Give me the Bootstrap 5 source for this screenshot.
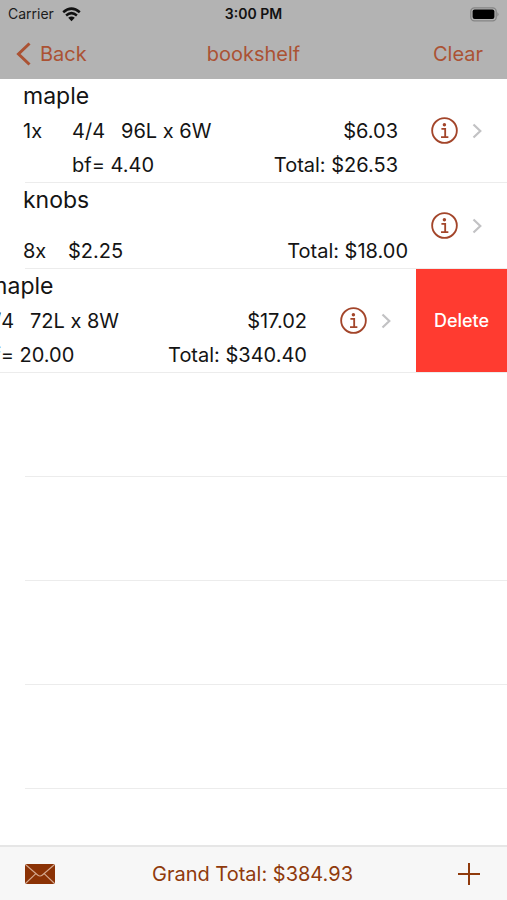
<!DOCTYPE html>
<html lang="en">
<head>
<meta charset="utf-8">
<meta name="viewport" content="width=device-width, initial-scale=1">
<title>bookshelf</title>
<link href="https://cdn.jsdelivr.net/npm/bootstrap@5.3.0/dist/css/bootstrap.min.css" rel="stylesheet">
<style>
body { font-family: Inter, "Liberation Sans", sans-serif; font-size: 20px; line-height: 34px; color: #141414; background: #fff; }
.topbar { background: #b3b3b3; }
.status { height: 28px; padding: 0 8px; font-size: 14px; line-height: 28px; color: #1c1c1c; }
.clock { font-weight: 600; color: #111; }
.titlebar { height: 51px; padding: 0 16px; color: #ab5233; }
.titlebar h1 { font-size: 20px; font-weight: 400; line-height: 34px; }
.plain { background: none; border: 0; padding: 0; color: inherit; line-height: inherit; }
.entry { min-height: 86px; }
.entry.tall, .slot { min-height: 104px; }
.entry::after, .slot::after { content: ""; display: block; height: 1px; background: #ececec; margin-left: 25px; }
.entry.swiped::after { margin-left: 0; }
.entry-body { padding: 0 25px 0 23px; }
.swiped .entry-main { margin-left: -91px; }
.title { font-size: 23px; font-weight: 400; line-height: 35px; }
.qty { width: 49px; }
.qty-short { width: 45px; }
.thick { width: 49px; }
.amounts { padding-right: 33px; }
.amounts-short { padding-right: 23px; }
.info { color: #a3452a; }
.info svg, .chev { display: block; }
.chev { margin-left: 14px; }
.del { width: 91px; background: #ff3b30; color: #fff; border: 0; padding: 0; font-size: 18px; font-weight: 500; }
.bottombar { min-height: 55px; padding: 0 27px 0 25px; background: #f7f7f7; border-top: 2px solid #e6e6e6; color: #8f3a0c; }
</style>
<script src="https://cdn.jsdelivr.net/npm/bootstrap@5.3.0/dist/js/bootstrap.bundle.min.js"></script>
</head>
<body class="d-flex flex-column min-vh-100 overflow-hidden">
<svg class="d-none" aria-hidden="true">
  <symbol id="i-info" viewBox="0 0 28 28">
    <circle cx="14" cy="14" r="12.8" fill="none" stroke="currentColor" stroke-width="1.9"/>
    <circle cx="13.9" cy="8" r="1.8" fill="currentColor"/>
    <path d="M10.8 12.4H14.7V20.6M10.4 20.8H18" fill="none" stroke="currentColor" stroke-width="1.9"/>
  </symbol>
  <symbol id="i-chev" viewBox="0 0 10 16">
    <path d="M1.5 1.5L8.3 8L1.5 14.5" fill="none" stroke="#c2c2c4" stroke-width="2.2"/>
  </symbol>
</svg>
<header class="topbar">
  <div class="status row g-0 align-items-center">
    <div class="col d-flex align-items-center gap-2">
      <span>Carrier</span>
      <svg width="19" height="15" viewBox="0 0 19 15" aria-hidden="true">
        <path d="M1.2 5.3Q9.5 -2 17.8 5.3M4.1 8.5Q9.5 3.8 14.9 8.5" fill="none" stroke="#111" stroke-width="2.5"/>
        <path d="M6.2 10.8Q9.5 8 12.8 10.8L9.5 14.2Z" fill="#111"/>
      </svg>
    </div>
    <div class="col-auto clock">3:00 PM</div>
    <div class="col d-flex justify-content-end">
      <svg width="30" height="15" viewBox="0 0 30 15" aria-hidden="true">
        <rect x="1.8" y=".8" width="25.4" height="13" rx="3.6" fill="none" stroke="#858585" stroke-width="1.3"/>
        <rect x="3.6" y="2.6" width="21.8" height="9.4" rx="2" fill="#000"/>
        <path d="M28.4 5Q30.6 7.3 28.4 9.8Z" fill="#858585"/>
      </svg>
    </div>
  </div>
  <nav class="titlebar row g-0 align-items-center" aria-label="Title bar">
    <div class="col">
      <button type="button" class="plain d-flex align-items-center gap-2">
        <svg width="16" height="24" viewBox="0 0 16 24" aria-hidden="true"><path d="M13.5 1.5L2.5 12L13.5 22.5" fill="none" stroke="currentColor" stroke-width="3"/></svg>Back
      </button>
    </div>
    <h1 class="col-auto mb-0">bookshelf</h1>
    <div class="col text-end"><button type="button" class="plain me-2">Clear</button></div>
  </nav>
</header>
<main class="flex-grow-1">
  <ul class="list-unstyled mb-0">
    <li class="entry tall d-flex flex-column">
      <div class="entry-body d-flex align-items-center flex-grow-1">
        <div class="flex-grow-1 align-self-stretch">
          <h2 class="title mb-0">maple</h2>
          <div class="amounts d-flex"><span class="qty">1x</span><span class="thick">4/4</span><span>96L x 6W</span><span class="ms-auto">$6.03</span></div>
          <div class="amounts d-flex"><span class="qty"></span><span>bf= 4.40</span><span class="ms-auto">Total: $26.53</span></div>
        </div>
        <button type="button" class="plain info" aria-label="Details of maple"><svg width="27" height="27"><use href="#i-info"/></svg></button>
        <svg class="chev" width="10" height="16" aria-hidden="true"><use href="#i-chev"/></svg>
      </div>
    </li>
    <li class="entry d-flex flex-column">
      <div class="entry-body d-flex align-items-center flex-grow-1">
        <div class="flex-grow-1 align-self-stretch d-flex flex-column justify-content-between">
          <h2 class="title mb-0">knobs</h2>
          <div class="amounts-short d-flex"><span class="qty-short">8x</span><span>$2.25</span><span class="ms-auto">Total: $18.00</span></div>
        </div>
        <button type="button" class="plain info" aria-label="Details of knobs"><svg width="27" height="27"><use href="#i-info"/></svg></button>
        <svg class="chev" width="10" height="16" aria-hidden="true"><use href="#i-chev"/></svg>
      </div>
    </li>
    <li class="entry tall swiped d-flex flex-column overflow-hidden">
      <div class="d-flex flex-grow-1">
        <div class="entry-main entry-body w-100 flex-shrink-0 d-flex align-items-center">
          <div class="flex-grow-1 align-self-stretch">
            <h2 class="title mb-0">hard maple</h2>
            <div class="amounts d-flex"><span class="qty">20x</span><span class="thick">4/4</span><span>72L x 8W</span><span class="ms-auto">$17.02</span></div>
            <div class="amounts d-flex"><span class="qty"></span><span>bf= 20.00</span><span class="ms-auto">Total: $340.40</span></div>
          </div>
          <button type="button" class="plain info" aria-label="Details of hard maple"><svg width="27" height="27"><use href="#i-info"/></svg></button>
          <svg class="chev" width="10" height="16" aria-hidden="true"><use href="#i-chev"/></svg>
        </div>
        <button type="button" class="del flex-shrink-0">Delete</button>
      </div>
    </li>
    <li class="slot d-flex flex-column justify-content-end"></li>
    <li class="slot d-flex flex-column justify-content-end"></li>
    <li class="slot d-flex flex-column justify-content-end"></li>
    <li class="slot d-flex flex-column justify-content-end"></li>
  </ul>
</main>
<footer class="bottombar row g-0 align-items-center">
  <div class="col d-flex">
    <button type="button" class="plain" aria-label="Send by mail">
      <svg class="d-block" width="30" height="20" viewBox="0 0 30 20"><rect width="30" height="20" rx="2" fill="#8b3205"/><path d="M1 1L12.6 11Q15 13 17.4 11L29 1M1 19L10.8 9.7M29 19L19.2 9.7" fill="none" stroke="#d5a88f" stroke-width="1.1"/></svg>
    </button>
  </div>
  <div class="col-auto">Grand Total: $384.93</div>
  <div class="col d-flex justify-content-end">
    <button type="button" class="plain" aria-label="Add item">
      <svg class="d-block" width="22" height="22" viewBox="0 0 22 22"><path d="M11 0V22M0 11H22" stroke="currentColor" stroke-width="2"/></svg>
    </button>
  </div>
</footer>
</body>
</html>
